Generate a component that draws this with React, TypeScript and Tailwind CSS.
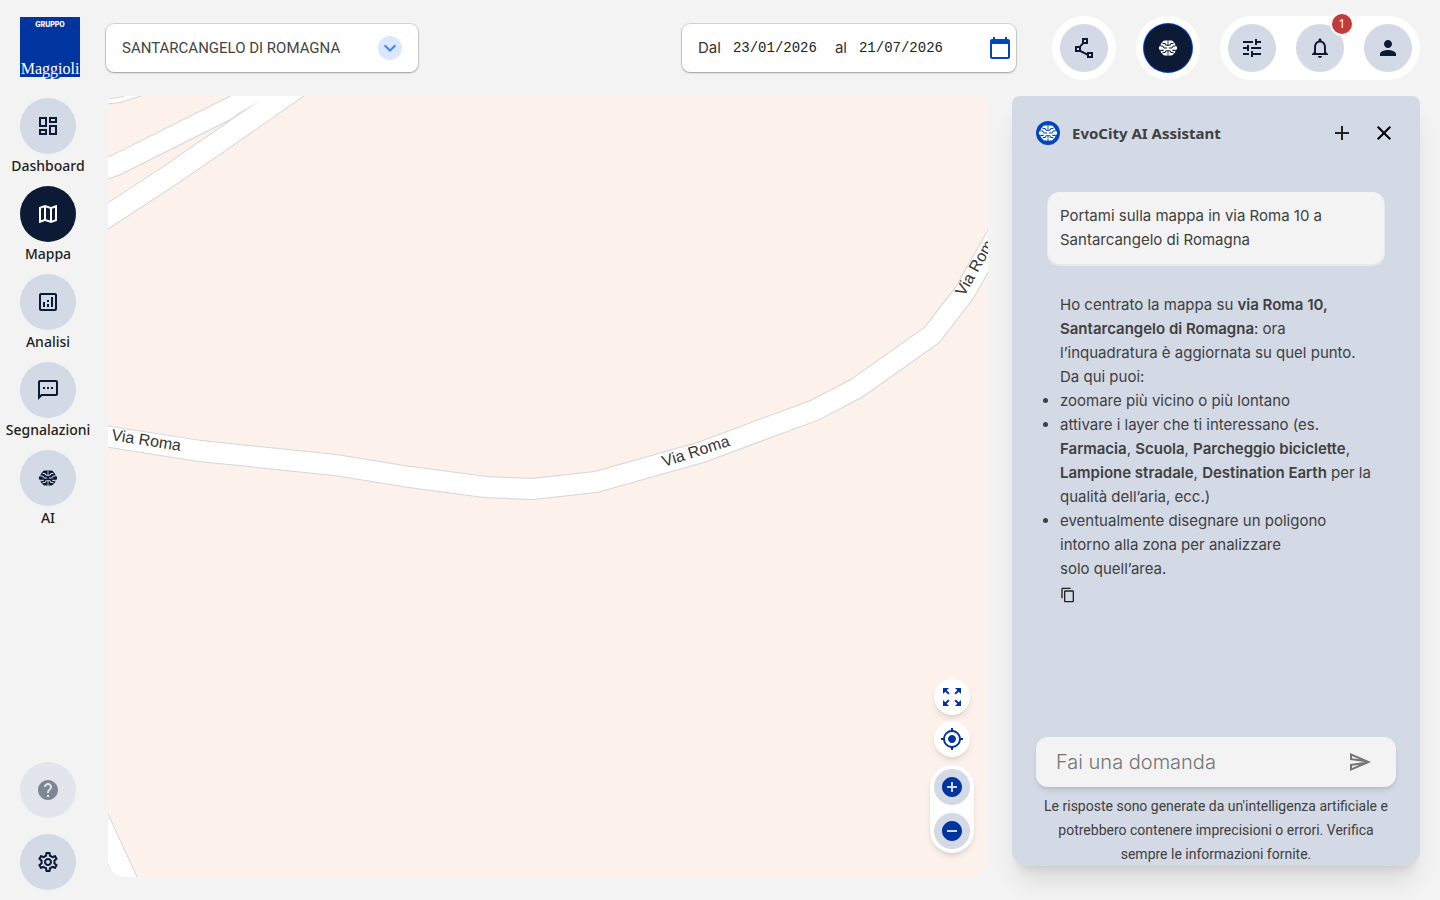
import { useId } from "react";
import type { ReactNode } from "react";
import {
  MdAdd,
  MdAddCircle,
  MdCalendarToday,
  MdClose,
  MdContentCopy,
  MdHelp,
  MdKeyboardArrowDown,
  MdMyLocation,
  MdOutlineAnalytics,
  MdOutlineDashboard,
  MdOutlineMap,
  MdOutlineNotifications,
  MdOutlinePolyline,
  MdOutlineSend,
  MdOutlineSettings,
  MdOutlineSms,
  MdPerson,
  MdRemoveCircle,
  MdTune,
  MdZoomOutMap,
} from "react-icons/md";

function BrainIcon({ className }: { className?: string }) {
  const id = useId();
  return (
    <svg viewBox="0 0 24 24" className={className} aria-hidden="true">
      <mask id={id}>
        <path
          fill="#fff"
          d="M8 3h8c1.500 0 2.400 1 2.700 2.300 1.300.4 2 1.500 2 2.900v.8c1.300.6 2.300 1.500 2.300 3s-1 2.400-2.300 3v.8c0 1.400-.7 2.500-2 2.900C18.400 20 17.500 21 16 21H8c-1.500 0-2.400-1-2.700-2.300-1.300-.4-2-1.500-2-2.900V15C2 14.400 1 13.500 1 12s1-2.400 2.300-3v-.8c0-1.400.7-2.500 2-2.900C5.600 4 6.500 3 8 3Z"
        />
        <g fill="none" stroke="#000" strokeWidth="1.300">
          <path d="M12 3v6M12 15v6" strokeWidth="1" />
          <path d="M12 8.700H9.800L8.300 6.500H5.500M12 8.700h2.200l1.500-2.200h2.800" />
          <path d="M3 9.500h2.500l2 2.500H11M21 9.500h-2.500l-2 2.500H13" />
          <path d="M12 15.300H9.800l-1.500 2.200H5.500M12 15.300h2.200l1.500 2.200h2.800" />
          <path d="M3 14.800h3.800M21 14.800h-3.800" />
        </g>
      </mask>
      <rect width="24" height="24" fill="currentColor" mask={`url(#${id})`} />
    </svg>
  );
}

function Logo() {
  return (
    <svg width="60" height="62" viewBox="0 0 60 62" role="img" aria-label="Gruppo Maggioli">
      <rect width="60" height="60" fill="#0035a0" />
      <ellipse cx="28" cy="59" rx="4" ry="3" fill="#0035a0" />
      <ellipse cx="36" cy="59" rx="4" ry="3" fill="#0035a0" />
      <text x="30" y="10" textAnchor="middle" fill="#fff" className="font-['Inter',sans-serif] text-[7px] font-extrabold">
        GRUPPO
      </text>
      <text x="30" y="57" textAnchor="middle" fill="#fff" className="font-['Liberation_Serif',serif] text-[16px]">
        Maggioli
      </text>
    </svg>
  );
}

interface NavItemProps {
  label: string;
  icon: ReactNode;
  active?: boolean;
}

function NavItem({ label, icon, active = false }: NavItemProps) {
  return (
    <a
      href="#"
      aria-current={active ? "page" : undefined}
      className="flex h-22 flex-col items-center gap-0.5 text-sm font-medium text-[#222]"
    >
      <span
        className={`flex size-14 items-center justify-center rounded-full ${
          active ? "bg-[#0c1a36] text-white" : "bg-[#d3d9e5] text-[#0c1a36]"
        }`}
      >
        {icon}
      </span>
      {label}
    </a>
  );
}

interface RoundButtonProps {
  label: string;
  children: ReactNode;
  className?: string;
}

function RoundButton({ label, children, className = "bg-[#d3d9e5] text-[#0c1a36]" }: RoundButtonProps) {
  return (
    <button
      type="button"
      aria-label={label}
      className={`relative flex size-12 items-center justify-center rounded-full ${className}`}
    >
      {children}
    </button>
  );
}

function TopBar() {
  return (
    <header className="flex h-24 items-center px-5">
      <Logo />

      <div className="relative ml-[26px] w-78">
        <select
          aria-label="Comune"
          className="h-12 w-full appearance-none rounded-lg bg-white pr-12 pl-4 font-['Roboto',sans-serif] text-[15px] text-[#444] shadow-[0_1px_2px_rgba(0,0,0,0.25),0_0_0_1px_rgba(0,0,0,0.12)]"
        >
          <option>SANTARCANGELO DI ROMAGNA</option>
        </select>
        <span className="pointer-events-none absolute top-3 right-4 flex size-6 items-center justify-center rounded-full bg-[#dbe7ff] text-[#3f83f8]">
          <MdKeyboardArrowDown size={24} />
        </span>
      </div>

      <div className="ml-auto flex h-12 w-[334px] items-center rounded-lg bg-white pr-1 pl-4 text-[15px] text-[#333] shadow-[0_1px_2px_rgba(0,0,0,0.25),0_0_0_1px_rgba(0,0,0,0.12)]">
        <label htmlFor="from">Dal</label>
        <input
          id="from"
          defaultValue="23/01/2026"
          className="ml-3 w-[102px] font-['Liberation_Mono',monospace] text-sm text-[#222] outline-none"
        />
        <label htmlFor="to">al</label>
        <input
          id="to"
          defaultValue="21/07/2026"
          className="ml-3 w-24 font-['Liberation_Mono',monospace] text-sm text-[#222] outline-none"
        />
        <button type="button" aria-label="Apri calendario" className="ml-auto text-[#0047bb]">
          <MdCalendarToday size={24} />
        </button>
      </div>

      <div className="ml-9 flex gap-5">
        <div className="rounded-full bg-white p-2">
          <RoundButton label="Area">
            <MdOutlinePolyline size={24} />
          </RoundButton>
        </div>
        <div className="rounded-full bg-white p-2">
          <RoundButton label="Assistente AI" className="bg-[#0c1a36] text-white ring-1 ring-[#0047bb]">
            <BrainIcon className="size-5" />
          </RoundButton>
        </div>
        <div className="flex gap-5 rounded-full bg-white p-2">
          <RoundButton label="Filtri">
            <MdTune size={24} />
          </RoundButton>
          <RoundButton label="Notifiche">
            <MdOutlineNotifications size={24} />
            <span className="absolute -top-2.5 -right-2 flex size-5 items-center justify-center rounded-full bg-[#c23b3b] font-['Noto_Sans',sans-serif] text-xs text-white ring-2 ring-[#f8f8f8]">
              1
            </span>
          </RoundButton>
          <RoundButton label="Profilo">
            <MdPerson size={24} />
          </RoundButton>
        </div>
      </div>
    </header>
  );
}

const roads = [
  { d: "M-10 6 L4 5 L12 4 L40 -5", width: 4 },
  { d: "M-12 76 L8 69 L142 2 L175 -22", width: 20 },
  { d: "M-20 133 L64 78 L125 36 L198 -15", width: 21 },
  { d: "M-16 338 L92 355 L227 369 L302 381 L377 391 L425 393 L488 386 L594 356 L707 314 L749 292 L824 239 L857 196 L892 134", width: 20 },
  { d: "M-29 680 L41 832", width: 20 },
];

function StreetMap() {
  return (
    <svg viewBox="0 0 880 781" preserveAspectRatio="xMidYMid slice" className="absolute inset-0 size-full">
      <g fill="none" stroke="#d6d6d6">
        {roads.map((road) => (
          <path key={road.d} d={road.d} strokeWidth={road.width + 2} />
        ))}
      </g>
      <g fill="none" stroke="#fff">
        {roads.map((road) => (
          <path key={road.d} d={road.d} strokeWidth={road.width} />
        ))}
      </g>
      {/* sliver where the two northern roads merge */}
      <path d="M116 29 L130 17 L152 5 Z" fill="#dedede" />
      <path id="label-west" d="M3 344 L92 358" fill="none" />
      <path id="label-center" d="M556 371 L640 344" fill="none" />
      <path id="label-east" d="M856 201 L892 138" fill="none" />
      <g fill="#333" className="font-['Liberation_Sans',sans-serif] text-[16px]">
        <text>
          <textPath href="#label-west">Via Roma</textPath>
        </text>
        <text>
          <textPath href="#label-center">Via Roma</textPath>
        </text>
        <text>
          <textPath href="#label-east">Via Roma</textPath>
        </text>
      </g>
    </svg>
  );
}

function MapView() {
  return (
    <main className="relative mb-[23px] ml-3 min-w-0 flex-1 overflow-hidden rounded-t-lg rounded-b-2xl bg-[#fcf1eb]">
      <StreetMap />
      <div className="absolute right-3.5 bottom-6 flex flex-col items-center text-[#0035a0]">
        <button type="button" aria-label="Schermo intero" className="mb-1.5 flex size-9 items-center justify-center rounded-full bg-white shadow-md">
          <MdZoomOutMap size={24} />
        </button>
        <button type="button" aria-label="La mia posizione" className="mb-2 flex size-9 items-center justify-center rounded-full bg-white shadow-md">
          <MdMyLocation size={24} />
        </button>
        <div className="flex flex-col gap-2 rounded-full bg-white p-1 shadow-md">
          <button type="button" aria-label="Aumenta zoom" className="flex size-9 items-center justify-center rounded-full bg-[#d3d9e5]">
            <MdAddCircle size={24} />
          </button>
          <button type="button" aria-label="Riduci zoom" className="flex size-9 items-center justify-center rounded-full bg-[#d3d9e5]">
            <MdRemoveCircle size={24} />
          </button>
        </div>
      </div>
    </main>
  );
}

function ChatPanel() {
  return (
    <aside className="mr-5 mb-[34px] ml-6 flex w-102 flex-col rounded-t-lg rounded-b-2xl bg-[#d3d9e5] px-6 text-[#404040] shadow-xl">
      <div className="mt-[25px] flex h-6 items-center">
        <span className="flex size-6 items-center justify-center rounded-full bg-[#0047bb] text-white">
          <BrainIcon className="size-5" />
        </span>
        <h1 className="ml-3 font-['Noto_Sans',sans-serif] text-[15px] font-bold">EvoCity AI Assistant</h1>
        <button type="button" aria-label="Nuova chat" className="ml-auto text-[#222]">
          <MdAdd size={24} />
        </button>
        <button type="button" aria-label="Chiudi" className="ml-[18px] text-black">
          <MdClose size={24} />
        </button>
      </div>

      <div className="mt-[47px] flex-1 px-3 text-[15px] leading-6">
        <p className="rounded-xl bg-[#f3f3f3] p-3 shadow-[0_1px_0_1px_#e6e8ec]">
          Portami sulla mappa in via Roma 10 a Santarcangelo di Romagna
        </p>

        <div className="mt-[29px] pl-3">
          <p>
            Ho centrato la mappa su <strong className="font-semibold">via Roma 10, Santarcangelo di Romagna</strong>: ora l’inquadratura è aggiornata su quel punto.
          </p>
          <p>Da qui puoi:</p>
          <ul className="-ml-4 list-disc pl-4">
            <li>zoomare più vicino o più lontano</li>
            <li>
              attivare i layer che ti interessano (es. <strong className="font-semibold">Farmacia</strong>,{" "}
              <strong className="font-semibold">Scuola</strong>, <strong className="font-semibold">Parcheggio biciclette</strong>,{" "}
              <strong className="font-semibold">Lampione stradale</strong>,{" "}
              <strong className="font-semibold">Destination Earth</strong> per la qualità dell’aria, ecc.)
            </li>
            <li className="pr-8">
              eventualmente disegnare un poligono intorno alla zona per analizzare solo{"\u00a0"}quell’area.
            </li>
          </ul>
          <button type="button" aria-label="Copia" className="mt-1.5 block text-[#222]">
            <MdContentCopy size={16} />
          </button>
        </div>
      </div>

      <form className="flex h-[50px] items-center rounded-xl bg-[#f3f3f3] pr-6 pl-5 shadow-md">
        <input
          aria-label="Fai una domanda"
          placeholder="Fai una domanda"
          className="min-w-0 flex-1 text-xl font-light outline-none placeholder:text-[#757575]"
        />
        <button type="button" aria-label="Invia" className="text-[#757575]">
          <MdOutlineSend size={24} />
        </button>
      </form>
      <p className="mt-[7px] text-center font-['Roboto',sans-serif] text-sm leading-6">
        Le risposte sono generate da un'intelligenza artificiale e potrebbero contenere imprecisioni o errori. Verifica sempre le informazioni fornite.
      </p>
    </aside>
  );
}

export default function App() {
  return (
    <div className="flex min-h-screen flex-col bg-[#f3f3f3] font-['Inter',sans-serif]">
      <TopBar />
      <div className="flex flex-1">
        {/* Sidebar */}
        <nav className="flex w-24 flex-col pt-0.5 pb-2.5 font-['Noto_Sans',sans-serif]">
          <NavItem label="Dashboard" icon={<MdOutlineDashboard size={24} />} />
          <NavItem label="Mappa" active icon={<MdOutlineMap size={24} />} />
          <NavItem label="Analisi" icon={<MdOutlineAnalytics size={24} />} />
          <NavItem label="Segnalazioni" icon={<MdOutlineSms size={24} />} />
          <NavItem label="AI" icon={<BrainIcon className="size-5" />} />
          <div className="mt-auto flex flex-col items-center gap-4 text-[#0c1a36]">
            <button type="button" disabled aria-label="Aiuto" className="flex size-14 items-center justify-center rounded-full bg-[#d3d9e5] opacity-50">
              <MdHelp size={24} />
            </button>
            <button type="button" aria-label="Impostazioni" className="flex size-14 items-center justify-center rounded-full bg-[#d3d9e5]">
              <MdOutlineSettings size={24} />
            </button>
          </div>
        </nav>
        <MapView />
        <ChatPanel />
      </div>
    </div>
  );
}
